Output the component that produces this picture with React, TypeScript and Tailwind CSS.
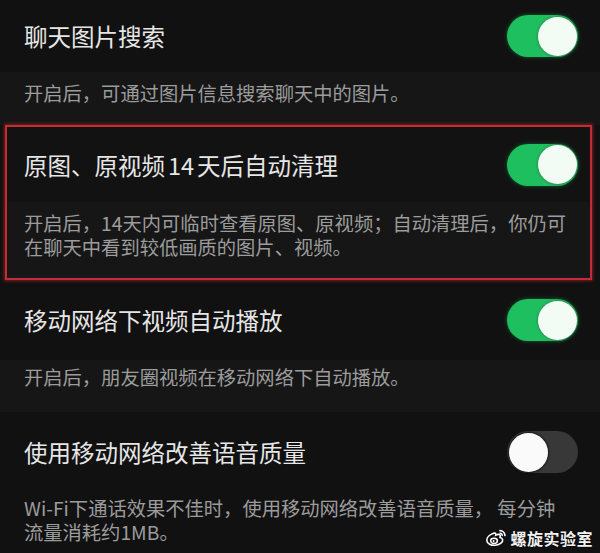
import React from "react";

const font = { fontFamily: '"Noto Sans CJK SC", "Noto Sans", sans-serif' };

function Toggle({ on }: { on: boolean }) {
  if (on) {
    return (
      <div className="w-[71px] h-[42px] rounded-full bg-[#1ebf5e] flex items-center justify-end pr-[1px] shadow-[0_0_4px_rgba(30,191,94,0.45)] shrink-0">
        <div className="w-[39px] h-[39px] rounded-full bg-[#f3fbf5] shadow-[0_0_2px_1px_rgba(60,110,80,0.55)]" />
      </div>
    );
  }
  return (
    <div className="w-[71px] h-[42px] rounded-full bg-[#383838] flex items-center justify-start pl-[2px] shrink-0">
      <div className="w-[39px] h-[39px] rounded-full bg-[#fafafa] shadow-[0_0_2px_1px_rgba(0,0,0,0.6)]" />
    </div>
  );
}

function WeiboLogo() {
  return (
    <svg width="22" height="18" viewBox="0 0 22 18" fill="none">
      <path
        d="M8.5 4.2C4.6 5.6 1.5 8.6 1.8 11.6c0.3 3 4.2 5 8.6 4.6 4.6-0.4 7.8-3 7.2-5.6-0.3-1.4-1.6-1.9-2.6-2.1 0.6-1.4 0.4-2.6-0.6-3-1-0.4-2.4 0-3.6 0.6 0.3-1-0.1-1.9-1-2-0.5 0-1 0.1-1.3 0.1z"
        stroke="#fff"
        strokeWidth="1.6"
        fill="none"
      />
      <ellipse cx="9" cy="11.8" rx="3.4" ry="2.6" stroke="#fff" strokeWidth="1.5" />
      <circle cx="8.6" cy="12" r="1" fill="#fff" />
      <path d="M15 1.6c2.6 0.1 4.8 2.2 4.9 4.9" stroke="#fff" strokeWidth="1.7" strokeLinecap="round" />
      <path d="M15.1 4.2c1.2 0.1 2.1 1 2.2 2.2" stroke="#fff" strokeWidth="1.5" strokeLinecap="round" />
    </svg>
  );
}

export default function App() {
  const title = "text-[23.5px] leading-[30px] text-[#e6e6e6]";
  const line = "h-[24px] flex items-center whitespace-nowrap text-[19.3px] leading-[20px] text-[#9c9c9c]";
  return (
    <div
      className="relative w-[600px] h-[553px] overflow-hidden bg-[#111111]"
      style={font}
    >
      {/* Row 1 */}
      <div className="h-[72px] flex items-center justify-between pl-[24px] pr-[22px]">
        <span className={title}>聊天图片搜索</span>
        <Toggle on />
      </div>
      <div className="pl-[24px] pt-[9px] pb-[20px] bg-[#161616]">
        <div className={line}>开启后，可通过图片信息搜索聊天中的图片。</div>
      </div>

      {/* Row 2 (highlighted) */}
      <div className="ml-[5px] mr-[8px] border-2 border-[#c32c34] shadow-[0_0_3px_1px_rgba(200,40,50,0.55)] bg-[#121212]">
        <div className="h-[75px] flex items-center justify-between pl-[17px] pr-[12px]">
          <span className={title}>
            原图、原视频<span className="mx-[3px]">14</span>天后自动清理
          </span>
          <Toggle on />
        </div>
        <div className="pl-[17px] pt-[9px] pb-[19px] bg-[#161616]">
          <div className={line}>开启后，14天内可临时查看原图、原视频；自动清理后，你仍可</div>
          <div className={line}>在聊天中看到较低画质的图片、视频。</div>
        </div>
      </div>

      {/* Row 3 */}
      <div className="h-[80px] flex items-center justify-between pl-[24px] pr-[22px]">
        <span className={title}>移动网络下视频自动播放</span>
        <Toggle on />
      </div>
      <div className="pl-[24px] pt-[5px] pb-[23px] bg-[#161616]">
        <div className={line}>开启后，朋友圈视频在移动网络下自动播放。</div>
      </div>

      {/* Row 4 */}
      <div className="h-[80px] flex items-center justify-between pl-[24px] pr-[22px]">
        <span className={title}>使用移动网络改善语音质量</span>
        <Toggle on={false} />
      </div>
      <div className="pl-[24px] pt-[4px]">
        <div className={line}>Wi-Fi下通话效果不佳时，使用移动网络改善语音质量， 每分钟</div>
        <div className={line}>流量消耗约1MB。</div>
      </div>

      {/* Watermark */}
      <div className="absolute right-[7px] bottom-[5px] flex items-center gap-[3px]">
        <WeiboLogo />
        <span className="text-[16px] leading-[20px] font-semibold text-[#f2f2f2] [text-shadow:0_0_2px_rgba(0,0,0,0.9)] tracking-[0.5px]">
          螺旋实验室
        </span>
      </div>
    </div>
  );
}
